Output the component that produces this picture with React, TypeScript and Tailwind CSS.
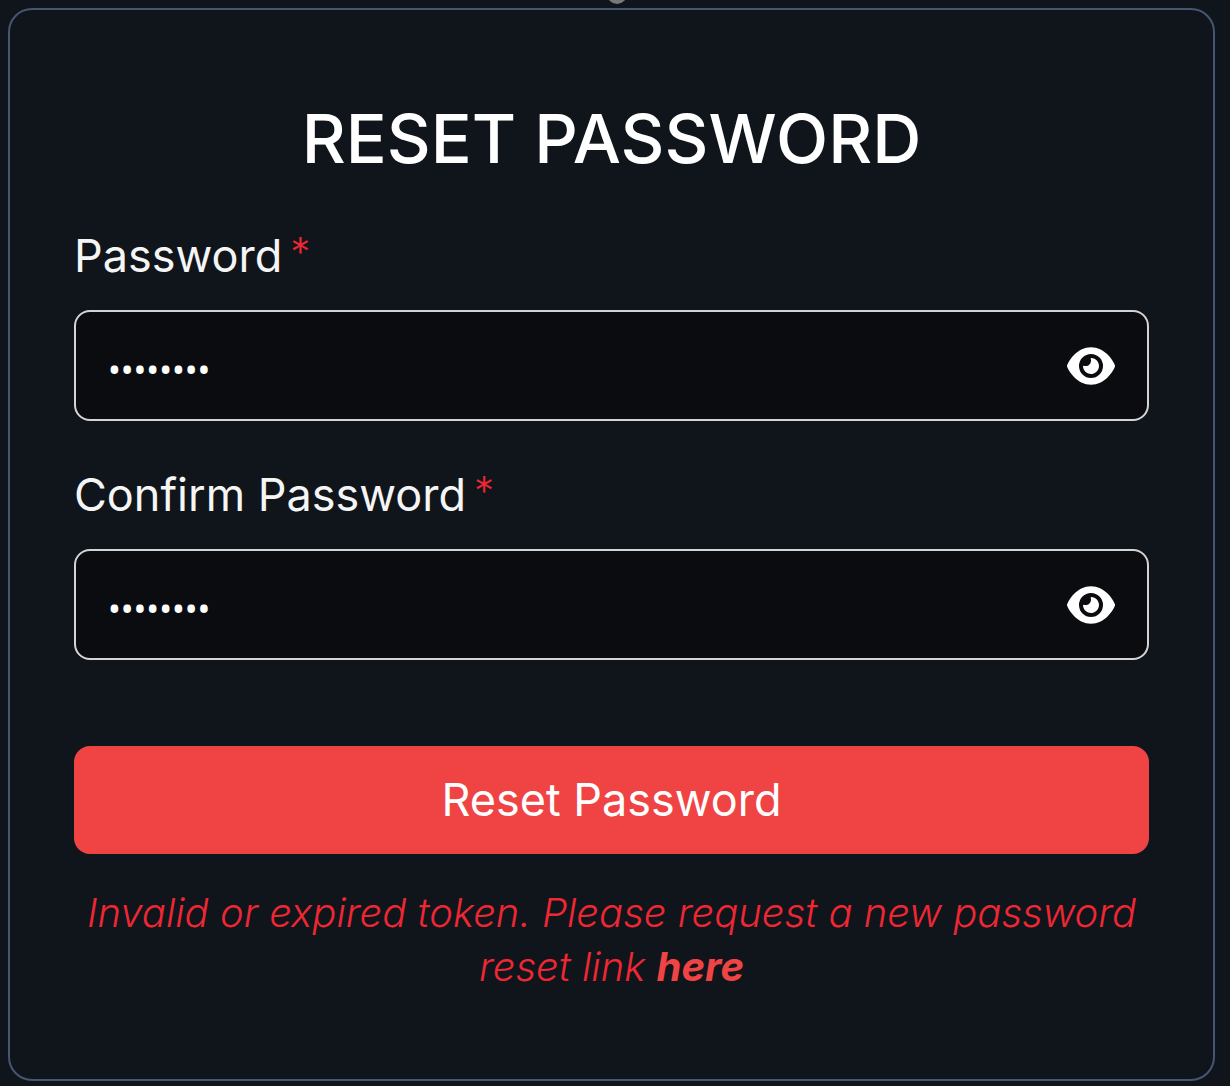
import { useState } from "react";
import { FaEye, FaEyeSlash } from "react-icons/fa6";

type PasswordFieldProps = { id: string; label: string };

function PasswordField({ id, label }: PasswordFieldProps) {
  const [visible, setVisible] = useState(false);
  const [value, setValue] = useState("password");
  return (
    <div className="flex flex-col gap-6">
      <label htmlFor={id} className="flex items-start gap-2 text-[45px] leading-[60px] text-[#f5f5f5]">
        {label}
        <span className="text-[40px] leading-[52px] font-light text-[#ee2733]">*</span>
      </label>
      <div className="flex h-[111px] items-center rounded-2xl border-2 border-[#d4d4d4] bg-[#0b0c10] px-8">
        <input
          id={id}
          type={visible ? "text" : "password"}
          value={value}
          onChange={(e) => setValue(e.target.value)}
          className="min-w-0 flex-1 bg-transparent pt-2 font-['Noto_Sans',sans-serif] text-[34px] text-white outline-none"
        />
        <button
          type="button"
          aria-label={visible ? `Hide ${label}` : `Show ${label}`}
          onClick={() => setVisible(!visible)}
          className="text-5xl text-white"
        >
          {visible ? <FaEyeSlash /> : <FaEye />}
        </button>
      </div>
    </div>
  );
}

export default function App() {
  return (
    <div className="relative min-h-screen overflow-hidden bg-[#10151c] pt-2 pr-[15px] pb-[5px] pl-2 font-['Inter',sans-serif]">
      <div className="absolute -top-4 left-1/2 size-5 -translate-x-2 rounded-full bg-[#77787a]" />
      <main className="rounded-3xl border-2 border-[#475670] px-16 pt-[88px] pb-[85px]">
        <h1 className="text-center text-[68px] leading-[80px] font-medium text-white">RESET PASSWORD</h1>
        <form className="mt-[48px]" onSubmit={(e) => e.preventDefault()}>
          <div className="flex flex-col gap-11">
            <PasswordField id="password" label="Password" />
            <PasswordField id="confirm-password" label="Confirm Password" />
          </div>
          <button
            type="submit"
            className="mt-[86px] h-[108px] w-full rounded-2xl bg-[#f04444] text-[45px] text-white"
          >
            Reset Password
          </button>
        </form>
        <p className="mt-8 text-center text-[40px] leading-[54px] font-light text-[#ee2733] italic">
          Invalid or expired token. Please request a new password reset link{" "}
          <a href="#" className="font-bold text-[#f04444]">
            here
          </a>
        </p>
      </main>
    </div>
  );
}
